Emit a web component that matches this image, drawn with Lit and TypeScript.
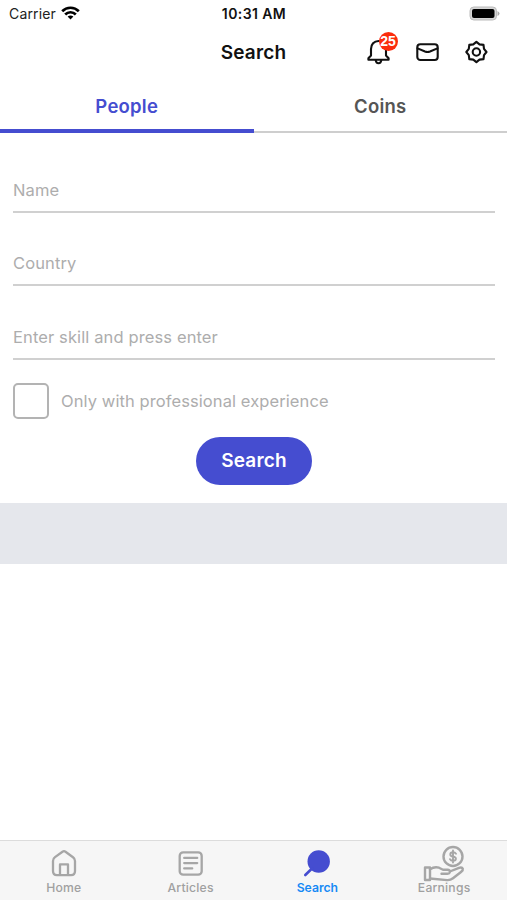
import { LitElement, html, css, svg } from "lit";
import { customElement, property, state } from "lit/decorators.js";
import { classMap } from "lit/directives/class-map.js";

@customElement("status-bar")
class StatusBar extends LitElement {
  static styles = css`
    :host { display: grid; grid-template-columns: 1fr auto 1fr; align-items: center; height: 28px; padding: 0 7px 0 9px; box-sizing: border-box; font: 14px/28px Inter, sans-serif; color: #222; }
    .left { display: flex; align-items: center; gap: 5px; letter-spacing: 0.15px; }
    .left svg { margin-top: -2px; }
    .time { font-weight: 600; font-size: 14px; color: #111; letter-spacing: 0.4px; transform: translateX(-0.5px); }
    .right { display: flex; justify-content: flex-end; margin-top: -2px; }
    svg { display: block; }
  `;
  render() {
    return html`
      <div class="left">
        <span>Carrier</span>
        <svg width="19" height="14" viewBox="0 0 19 14" fill="none" stroke="#000" stroke-width="2.7">
          <path d="M1.2 5.2C5.8 .6 13.2 .6 17.8 5.2" />
          <path d="M4.2 8.5C7.1 5.5 11.9 5.5 14.8 8.5" />
          <path d="M6.6 10.6Q9.5 8.2 12.4 10.6L9.5 13.6Z" fill="#000" stroke="none" />
        </svg>
      </div>
      <div class="time">10:31 AM</div>
      <div class="right">
        <svg width="31" height="15" viewBox="0 0 31 15">
          <rect x="1" y="1" width="26.5" height="13" rx="3.8" fill="#d6d6d6" stroke="#bbb" />
          <rect x="3" y="3" width="22.5" height="9" rx="2" />
          <path d="M28.500 5v5q2-1 2-2.500T28.500 5Z" fill="#aaa" />
        </svg>
      </div>
    `;
  }
}

@customElement("nav-header")
class NavHeader extends LitElement {
  static styles = css`
    :host { display: grid; grid-template-columns: 1fr auto 1fr; align-items: center; height: 48px; padding-right: 17px; padding-left: 17px; box-sizing: border-box; font-family: Inter, sans-serif; }
    .title { grid-column: 2; font-size: 19px; font-weight: 600; color: #111; letter-spacing: 0.200px; }
    .actions { display: flex; justify-content: flex-end; gap: 21px; }
    .action { position: relative; width: 28px; height: 28px; }
    .action svg { display: block; }
    .badge { position: absolute; left: 14.500px; top: -6px; width: 19px; height: 19px; border-radius: 50%; background: #fb2c0d; color: #fff; font: 600 14px/19px "Liberation Sans", sans-serif; text-align: center; }
  `;
  render() {
    return html`
      <div class="title">Search</div>
      <div class="actions">
        <div class="action">
          <svg width="28" height="28" viewBox="0 0 28 28" fill="none" stroke="#111" stroke-width="2.1" stroke-linejoin="round">
            <path d="M14.500 3C10 3 7 6.500 7 11V17.500L4.400 20.300V21.700H24.600V20.300L22 17.500V11C22 6.500 19 3 14.500 3Z" />
            <path d="M11.700 22Q12 25.300 14.500 25.300T17.300 22" />
          </svg>
          <span class="badge">25</span>
        </div>
        <div class="action">
          <svg width="28" height="28" viewBox="0 0 28 28" fill="none" stroke="#111" stroke-width="2.1" stroke-linecap="round" stroke-linejoin="round">
            <rect x="4.300" y="6.200" width="20.400" height="15.800" rx="3" />
            <path d="M4.600 10.400L12 13.500Q14.500 14.400 17 13.500L24.400 10.400" />
          </svg>
        </div>
        <div class="action">
          <svg width="28" height="28" viewBox="0 0 28 28" fill="none" stroke="#111" stroke-width="2.1" stroke-linejoin="round">
            <path d="M14.400 3.900L17.500 6.400L21.500 6.900L22 10.900L24.500 14L22 17.100L21.500 21.100L17.500 21.600L14.400 24.100L11.300 21.600L7.300 21.100L6.800 17.100L4.300 14L6.800 10.900L7.300 6.900L11.300 6.400Z" />
            <circle cx="14.400" cy="14" r="3.700" />
          </svg>
        </div>
      </div>
    `;
  }
}

@customElement("search-form")
class SearchForm extends LitElement {
  static styles = css`
    :host { display: block; padding: 37px 12px 18px 13px; font-family: Inter, sans-serif; }
    .field { height: 73.300px; }
    .field span { display: block; height: 41px; line-height: 41px; border-bottom: 2px solid #d0d0d0; font-size: 16.500px; color: #adadad; letter-spacing: 0.120px; }
    .check { display: flex; align-items: center; gap: 12px; height: 36px; margin-top: -7px; }
    .box { width: 36px; height: 36px; box-sizing: border-box; border: 2px solid #b3b3b3; border-radius: 5px; }
    .label { font-size: 16.500px; color: #adadad; letter-spacing: 0.090px; }
    .submit { display: block; width: 116px; height: 48px; margin: 18px auto 0; border: 0; padding: 0; border-radius: 24px; background: #454dd0; color: #fff; font: 600 19px/48px Inter, sans-serif; letter-spacing: 0.200px; }
  `;
  render() {
    return html`
      ${["Name", "Country", "Enter skill and press enter"].map((t) => html`<div class="field"><span>${t}</span></div>`)}
      <div class="check"><div class="box"></div><span class="label">Only with professional experience</span></div>
      <button class="submit">Search</button>
    `;
  }
}

const icons: Record<string, unknown> = {
  Home: svg`<g stroke-width="2.300" transform="translate(0 -.6)"><path d="M20.500 3.300Q22 2.300 23.500 3.300L31 8.800Q33 10.300 33 12.500V22.500Q33 26.700 29 26.700H15Q11 26.700 11 22.500V12.500Q11 10.300 13 8.800Z"/><path d="M18 26V16H26V26"/></g>`,
  Articles: svg`<g stroke-width="2.300" transform="translate(-.3 -.6)"><rect x="11" y="4" width="22" height="22.300" rx="3.500"/><path d="M15.500 9.500H28.500M15.500 14.700H28.500M15.500 20H23.500"/></g>`,
  Search: svg`<circle cx="23.700" cy="12.500" r="11.200" fill="#454dd0" stroke="none"/><path d="M17 19.500L10.300 26" stroke="#454dd0" stroke-width="2.600" stroke-linecap="round"/>`,
  Earnings: svg`<g stroke-width="2.400" transform="translate(0 -1.500)"><circle cx="31" cy="9" r="9.500"/><path d="M34 6.300Q33 4.800 31 4.800Q28.300 4.800 28.300 6.900Q28.300 8.600 31 9Q33.900 9.500 33.900 11.300Q33.900 13.400 31 13.400Q28.700 13.400 28 11.700M31 3V15" stroke-width="1.900"/><rect x="3" y="20" width="5" height="12.500"/><path d="M8 21.800Q12.500 18.700 17 20.200L21 22.200H25.500Q28.300 22.500 28 24.500Q27.500 26.200 25.500 26.200H19.500M27.800 24L37 20.300Q40 19.300 40.800 21.200Q41.300 22.700 39 24.500L31 30.800Q28.500 32.800 25 32.600L8 31"/></g>`,
};

@customElement("tab-bar")
class TabBar extends LitElement {
  @property() active = "Search";
  static styles = css`
    :host { display: grid; grid-template-columns: repeat(4, 1fr); height: 60px; box-sizing: border-box; border-top: 1px solid #dcdcdc; background: #f6f6f6; font-family: Inter, sans-serif; }
    .tab { display: flex; flex-direction: column; align-items: center; padding: 8px 0 0 1px; color: #a0a0a0; }
    .tab svg { display: block; overflow: visible; }
    .name { font-size: 12.200px; line-height: 16px; margin-top: 1px; font-weight: 500; letter-spacing: 0.200px; }
    .active .name { color: #168af5; font-weight: 600; letter-spacing: 0; }
  `;
  render() {
    return Object.keys(icons).map(
      (n) => html`<div class=${classMap({ tab: true, active: n === this.active })}>
        <svg width="44" height="30" viewBox="0 0 44 30" fill="none" stroke="#a6a6a6" stroke-linejoin="round" stroke-linecap="round">${icons[n]}</svg>
        <span class="name">${n}</span>
      </div>`
    );
  }
}

@customElement("app-root")
class AppRoot extends LitElement {
  @state() private section = "People";
  static styles = css`
    :host { display: flex; flex-direction: column; width: 507px; height: 900px; background: #fff; overflow: hidden; }
    .tabs { display: grid; grid-template-columns: 1fr 1fr; grid-template-rows: 57px; height: 57px; font: 600 18.500px/60px Inter, sans-serif; text-align: center; }
    .tab { box-sizing: border-box; height: 57px; border-bottom: 2px solid #cecece; color: #555; letter-spacing: 0.250px; }
    .selected { border-bottom: 4px solid #454dd0; color: #454dd0; }
    .strip { height: 61px; background: #e5e7ec; }
    .space { flex: 1; }
  `;
  render() {
    return html`
      <status-bar></status-bar>
      <nav-header></nav-header>
      <div class="tabs">
        ${["People", "Coins"].map((t) => html`<div class=${classMap({ tab: true, selected: t === this.section })} @click=${() => (this.section = t)}>${t}</div>`)}
      </div>
      <search-form></search-form>
      <div class="strip"></div>
      <div class="space"></div>
      <tab-bar></tab-bar>
    `;
  }
}
